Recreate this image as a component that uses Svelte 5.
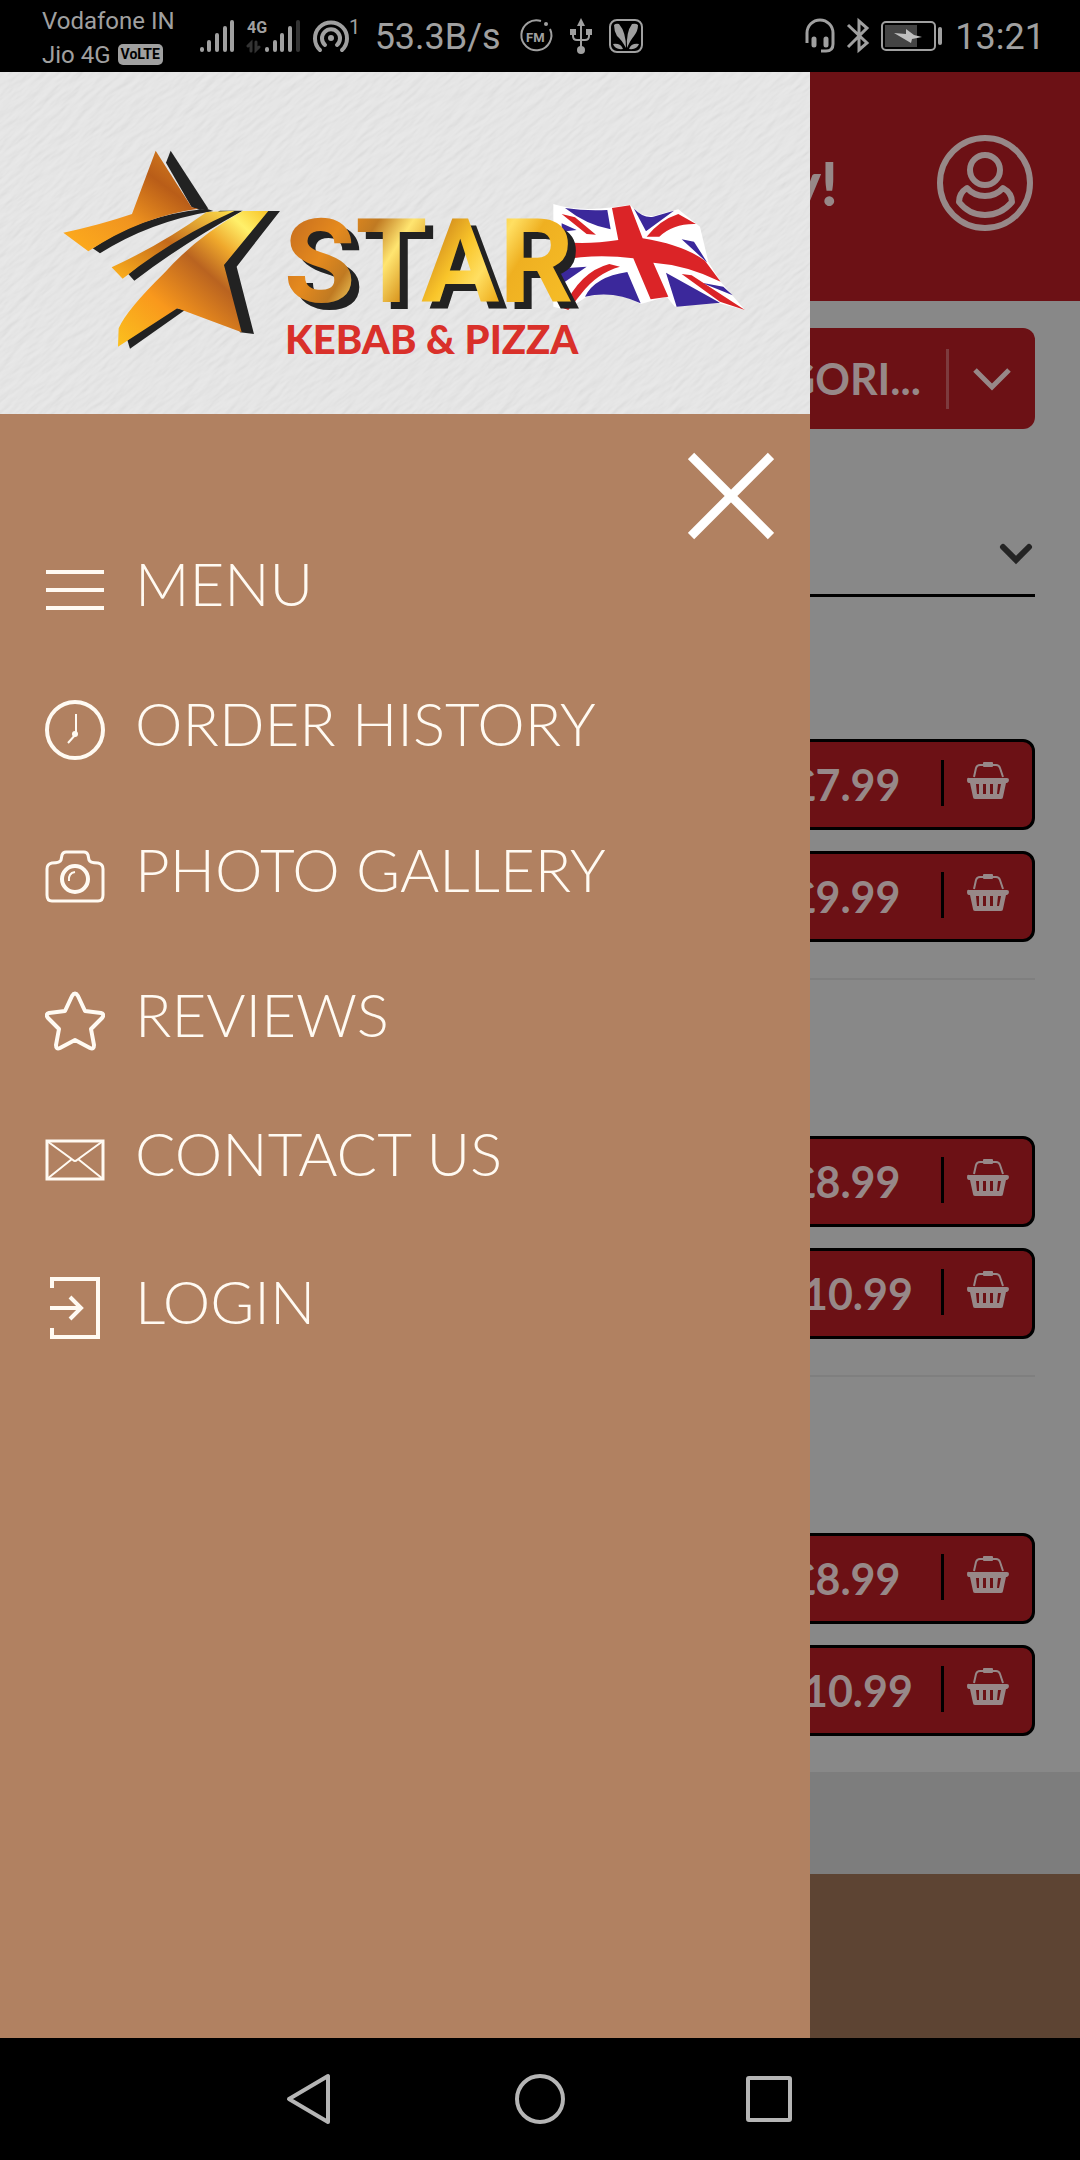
<script>
  const links = [
    { label: 'MENU', icon: 'bars' },
    { label: 'ORDER HISTORY', icon: 'clock' },
    { label: 'PHOTO GALLERY', icon: 'camera' },
    { label: 'REVIEWS', icon: 'star' },
    { label: 'CONTACT US', icon: 'mail' },
    { label: 'LOGIN', icon: 'login' },
  ];
  const groups = [
    ['£7.99', '£9.99'],
    ['£8.99', '£10.99'],
    ['£8.99', '£10.99'],
  ];
</script>

<div class="screen">
  <div class="status">
    <div class="carrier">
      <span>Vodafone IN</span>
      <span class="second">Jio 4G <b class="volte">VoLTE</b></span>
    </div>
    <div class="group signals">
      <svg width="36" height="34" viewBox="0 0 36 34" stroke="currentColor" stroke-width="4" stroke-linecap="round">
        <path d="M3 30v1M10 23v8M18 16v15M26 9v22M33 3v28" />
      </svg>
      <svg width="54" height="34" viewBox="0 0 54 34" stroke="currentColor" stroke-width="4" stroke-linecap="round">
        <text x="0" y="14" class="tiny">4G</text>
        <path d="M4 32V24l-3 3M9 23v8l3-3" fill="none" stroke="#333" stroke-width="3" />
        <path d="M20 30v1M28 23v8M35 16v15M43 9v22" />
        <path d="M51 3v28" stroke="#333" />
      </svg>
      <svg width="46" height="34" viewBox="0 0 46 34" fill="none" stroke="currentColor" stroke-width="4" stroke-linecap="round">
        <path d="M7 31A16 16 0 1 1 29 31" />
        <path d="M12 26A9 9 0 1 1 24 26" />
        <circle cx="18" cy="19" r="3" fill="currentColor" stroke="none" />
        <text x="36" y="15" class="one">1</text>
      </svg>
    </div>
    <span class="figure">53.3B/s</span>
    <div class="group apps">
      <svg width="34" height="34" viewBox="0 0 34 34" fill="none" stroke="currentColor" stroke-width="2">
        <path d="M22 2A15 15 0 1 0 31 10" />
        <circle cx="27" cy="5" r="2" fill="currentColor" stroke="none" />
        <text x="7" y="23" class="fm">FM</text>
      </svg>
      <svg width="22" height="36" viewBox="0 0 22 36" fill="none" stroke="currentColor" stroke-width="2">
        <path d="M11 4v28M3 13v5q0 4 4 4h8q4 0 4-4v-5" />
        <path d="M11 0l4 8H7zM0 11h6v6H0zM16 11h6v6h-6z" fill="currentColor" stroke="none" />
        <circle cx="11" cy="32" r="4" fill="currentColor" stroke="none" />
      </svg>
      <svg width="34" height="34" viewBox="0 0 34 34">
        <rect x="1" y="1" width="32" height="32" rx="7" fill="none" stroke="currentColor" stroke-width="2" />
        <path d="M5 6q2-2 5-1 7 8 7 24Q12 20 8 17 5 12 5 6zM29 6q-2-2-6-1-6 8-5 24 4-9 7-12 4-5 4-11zM4 25q8-1 10 5-8 1-10-5zM30 25q-8-1-10 5 8 1 10-5z" fill="currentColor" />
      </svg>
    </div>
    <div class="group system">
      <svg width="30" height="34" viewBox="0 0 30 34" fill="none" stroke="currentColor" stroke-width="3">
        <path d="M2 24V14a13 13 0 0 1 26 0v11q0 7-7 7h-5" />
        <path d="M9 20v6M21 20v6" stroke-width="5" stroke-linecap="round" />
      </svg>
      <svg width="22" height="36" viewBox="0 0 22 36" fill="none" stroke="currentColor" stroke-width="3">
        <path d="M1 7l19 18-8 7V3l8 7L1 29" />
      </svg>
      <svg width="62" height="30" viewBox="0 0 62 30">
        <rect x="1" y="1" width="53" height="28" rx="4" fill="none" stroke="currentColor" stroke-width="2" />
        <rect x="4" y="4" width="32" height="22" fill="#444" />
        <path d="M13 12l12 1V8l8 6 8 2-10 2-1 4z" fill="#c0c0c0" />
        <path d="M59 8v14" stroke="currentColor" stroke-width="4" stroke-linecap="round" />
      </svg>
      <span class="figure">13:21</span>
    </div>
  </div>

  <div class="stage">
    <div class="page">
      <header>
        <span class="greeting">y!</span>
        <button class="user" aria-label="Account">
          <svg width="98" height="98" viewBox="0 0 98 98" fill="none" stroke="currentColor" stroke-width="6">
            <circle cx="49" cy="49" r="45" />
            <circle cx="49" cy="36" r="15" />
            <path d="M31 54Q23 59 23 68 33 81 49 81 65 81 76 68 76 59 67 54 60 62 49 62 38 62 31 54z" stroke-linejoin="round" />
          </svg>
        </button>
      </header>
      <main>
        <button class="category">
          <span class="name">CATEGORI...</span>
          <span class="arrow">
            <svg width="38" height="24" viewBox="0 0 38 24" fill="none" stroke="currentColor" stroke-width="5"><path d="M2 3l17 17L36 3" /></svg>
          </span>
        </button>
        <div class="picker">
          <select aria-label="Section"><option></option></select>
          <svg width="34" height="22" viewBox="0 0 34 22" fill="none" stroke="#242424" stroke-width="6" stroke-linecap="round"><path d="M4 4l13 13L30 4" /></svg>
        </div>
        {#each groups as prices}
          <section>
            {#each prices as price}
              <button class="price">
                <span class="amount">{price}</span>
                <span class="bar"></span>
                <span class="basket">
                  <svg width="42" height="38" viewBox="0 0 42 38">
                    <path d="M7 15L9 6q1-3 4-3h16q3 0 4 3l3 9" fill="none" stroke="currentColor" stroke-width="2" />
                    <rect x="16" y="0" width="10" height="5" rx="1" fill="currentColor" />
                    <path fill="currentColor" fill-rule="evenodd" d="M2 16h38q2 0 2 2t-2 3h-1l-3 14q0 2-2 2H8q-2 0-2-2L3 21H2q-2 0-2-3t2-2zM9 22l1 10h2V22zM16 22v10h3V22zM23 22v10h3V22zM31 22l-1 10h2l2-10z" />
                  </svg>
                </span>
              </button>
            {/each}
          </section>
        {/each}
      </main>
      <div class="strip"></div>
      <footer></footer>
    </div>

    <aside class="drawer">
      <svg class="logo" viewBox="0 0 810 342" role="img" aria-label="Star Kebab and Pizza">
        <defs>
          <filter id="paper" x="0" y="0" width="100%" height="100%">
            <feTurbulence type="fractalNoise" baseFrequency="0.04 0.16" numOctaves="3" seed="4" result="n" />
            <feDiffuseLighting in="n" lighting-color="#ffffff" surfaceScale="1" diffuseConstant="1">
              <feDistantLight azimuth="90" elevation="64" />
            </feDiffuseLighting>
          </filter>
          <linearGradient id="top" x1="0" y1="1" x2="1" y2="0">
            <stop offset="0" stop-color="#ffae1c" /><stop offset=".4" stop-color="#f0941f" /><stop offset=".7" stop-color="#b95d18" /><stop offset="1" stop-color="#e08a20" />
          </linearGradient>
          <linearGradient id="mid" x1="0" y1="1" x2="1" y2="0">
            <stop offset="0" stop-color="#ffb31d" /><stop offset=".5" stop-color="#c46a1a" /><stop offset="1" stop-color="#ffe04c" />
          </linearGradient>
          <linearGradient id="low" x1="0" y1="1" x2="1" y2="0">
            <stop offset="0" stop-color="#fbc01e" /><stop offset=".3" stop-color="#f9981c" /><stop offset=".57" stop-color="#b96320" /><stop offset=".72" stop-color="#efa82c" /><stop offset=".86" stop-color="#fff06a" /><stop offset="1" stop-color="#f8c327" />
          </linearGradient>
          <linearGradient id="gold" x1="0" y1=".3" x2="1" y2=".6">
            <stop offset="0" stop-color="#c9701e" /><stop offset=".16" stop-color="#e58a1e" /><stop offset=".27" stop-color="#c07a22" /><stop offset=".38" stop-color="#ffe570" /><stop offset=".5" stop-color="#d9961f" /><stop offset=".6" stop-color="#f9c52a" /><stop offset=".7" stop-color="#ffdf62" /><stop offset=".8" stop-color="#efb021" /><stop offset="1" stop-color="#f5bb26" />
          </linearGradient>
        </defs>
        <rect width="810" height="342" fill="#dedede" />
        <g opacity=".35"><rect x="-250" y="-450" width="1300" height="1300" filter="url(#paper)" transform="rotate(-40 405 171)" /></g>
        <g transform="translate(40 58) scale(.3333)">
          <g fill="#222">
            <path d="M392 62L505 236 480 240 455 232 378 98z" />
            <path d="M158 355L180 370Q330 275 520 243L500 236Q300 255 158 355z" />
            <path d="M265 432L283 452Q430 340 608 242L540 242Q400 320 265 432z" />
            <path d="M680 243H720L590 410 642 612 600 607 550 405z" />
            <path d="M405 533L435 540 270 656 262 630z" />
          </g>
          <path fill="url(#top)" d="M347 62L276 252Q180 285 70 308L145 364Q300 260 475 236L455 232z" />
          <path fill="url(#mid)" d="M215 412L248 446Q400 325 585 242L500 246Q370 340 215 412z" />
          <path fill="url(#low)" d="M685 243H608Q470 320 372 430 260 540 236 595L234 650 412 535 605 607 552 405z" />
        </g>
        <g transform="translate(400 58) scale(.3333)">
          <path fill="#fff" d="M460 222Q530 245 640 232L690 224Q720 262 760 258L835 238 900 290 925 395 962 455 1035 540 940 515 825 530 800 500 722 522Q650 480 560 500L500 540 460 530z" />
          <g fill="#3b289b">
            <path d="M495 234Q560 244 622 240L632 298Q560 285 495 234zM485 280L530 300 485 305zM702 236Q730 265 760 260L822 242 738 304zM845 328L882 335 922 398zM470 416L560 410 480 466zM555 500Q585 440 682 426L722 520Q640 480 555 500zM798 428L960 518 830 530zM905 458L970 470 998 496z" />
          </g>
          <g fill="#db2427">
            <path d="M480 335Q560 345 655 330L636 234 690 226 728 325Q850 345 915 392L962 455Q860 405 760 398L805 500 752 508 700 385Q590 370 480 390z" />
            <path d="M485 252L525 262 588 314 560 312zM740 320Q780 270 835 252L888 282Q820 280 778 320zM490 535Q540 425 628 402L660 410Q590 430 545 490L505 540zM845 432L875 436 1035 540 960 515z" />
          </g>
        </g>
        <text class="brand" x="284" y="230" fill="url(#gold)">STAR</text>
        <text class="tagline" x="285" y="282">KEBAB &amp; PIZZA</text>
      </svg>

      <div class="closing">
        <button class="close" aria-label="Close menu">
          <svg width="86" height="88" viewBox="0 0 86 88" stroke="#fff" stroke-width="9"><path d="M3 4l80 80M83 4L3 84" /></svg>
        </button>
      </div>

      <nav>
        {#each links as { label, icon }}
          <a href="#{icon}">
            <svg class={icon} viewBox="0 0 60 64" fill="none" stroke="currentColor" stroke-width="4">
              {#if icon === 'bars'}
                <path d="M1 14h58M1 32h58M1 50h58" />
              {:else if icon === 'clock'}
                <circle cx="30" cy="32" r="28" />
                <path d="M31 16v20l-8 9" stroke-width="2" />
                <circle cx="30" cy="36" r="3" fill="currentColor" stroke="none" />
              {:else if icon === 'camera'}
                <path d="M7 19q8 0 9-3l1-5q1-3 4-3h18q3 0 4 3l1 5q1 3 9 3 5 1 5 6v26q0 6-5 6H7q-5 0-5-6V25q0-5 5-6z" stroke-width="3" />
                <circle cx="30" cy="35" r="13" />
                <path d="M24 37q-1-8 6-9" stroke-width="2" />
              {:else if icon === 'star'}
                <path stroke-linejoin="round" d="M27 7q3-5 6 0l7 15 16 2q4 1 1 5L46 40l3 16q0 5-4 3L30 51 15 59q-4 2-4-3l3-16L3 29q-3-4 1-5l16-2z" />
              {:else if icon === 'mail'}
                <path d="M2 13h56v38H2z" stroke-width="3" />
                <path d="M2 13l26 19q2 2 4 0l26-19M2 51l25-20M58 51L33 31" stroke-width="2" />
              {:else}
                <path d="M7 12V3h46v58H7v-9" />
                <path d="M5 32h31M25 21l11 11-11 11" />
              {/if}
            </svg>
            <span>{label}</span>
          </a>
        {/each}
      </nav>
    </aside>
  </div>

  <div class="keys">
    <button aria-label="Back">
      <svg width="50" height="54" viewBox="0 0 50 54"><path d="M43 4v46L4 27z" /></svg>
    </button>
    <button aria-label="Home">
      <svg width="50" height="54" viewBox="0 0 50 54"><circle cx="25" cy="27" r="23" /></svg>
    </button>
    <button aria-label="Recent apps">
      <svg width="50" height="54" viewBox="0 0 50 54"><rect x="3" y="6" width="42" height="42" rx="1" /></svg>
    </button>
  </div>
</div>

<style>
  :global(body) {
    margin: 0;
    background: #000;
  }
  .screen {
    display: flex;
    flex-direction: column;
    min-height: 100vh;
    font-family: Lato, sans-serif;
  }
  svg {
    display: block;
    flex: none;
  }
  button {
    margin: 0;
    padding: 0;
    border: 0;
    background: none;
    color: inherit;
    font: inherit;
  }

  .status {
    display: flex;
    align-items: center;
    height: 72px;
    padding: 0 35px 0 42px;
    color: #a0a0a0;
    background: #000;
    font-family: Roboto, sans-serif;
  }
  .status svg {
    overflow: visible;
  }
  .carrier {
    display: flex;
    flex-direction: column;
    padding-top: 3px;
    font-size: 24px;
    line-height: 34px;
    white-space: nowrap;
  }
  .second {
    display: flex;
    align-items: center;
    gap: 7px;
  }
  .volte {
    padding: 0 3px;
    border-radius: 5px;
    background: #a0a0a0;
    color: #000;
    font-size: 14px;
    line-height: 21px;
  }
  .group {
    display: flex;
    align-items: center;
    gap: 12px;
  }
  .signals {
    margin-left: 24px;
  }
  .apps {
    gap: 17px;
    margin-left: 18px;
  }
  .system {
    margin-left: auto;
  }
  .signals + .figure {
    margin-left: 16px;
  }
  .figure {
    padding-top: 2px;
    font-size: 36px;
    line-height: 40px;
  }
  .status text {
    fill: currentColor;
    stroke: none;
  }
  .tiny {
    font-size: 16px;
    font-weight: 700;
  }
  .one {
    font-size: 20px;
  }
  .fm {
    font-size: 13px;
    font-weight: 700;
  }

  .stage {
    position: relative;
    display: flex;
    flex: 1;
  }
  .page {
    display: flex;
    flex: 1;
    flex-direction: column;
    background: #888;
    color: #978888;
  }
  header {
    display: flex;
    align-items: center;
    justify-content: flex-end;
    gap: 98px;
    height: 221px;
    padding: 0 46px 8px;
    background: #6c1115;
  }
  .greeting {
    font-size: 60px;
    font-weight: 900;
  }
  main {
    display: flex;
    flex-direction: column;
    padding: 27px 45px 0;
  }
  .category {
    display: flex;
    align-items: center;
    justify-content: flex-end;
    height: 101px;
    border-radius: 12px;
    background: #6c1115;
    font-size: 43px;
    font-weight: 700;
  }
  .name {
    padding-right: 25px;
  }
  .arrow {
    display: flex;
    align-items: center;
    height: 60px;
    padding: 0 24px;
    border-left: 3px solid #7d3b3e;
  }
  .picker {
    display: grid;
    align-items: center;
    height: 80px;
    margin-top: 85px;
    border-bottom: 3px solid #000;
  }
  .picker select,
  .picker svg {
    grid-area: 1 / 1;
  }
  .picker select {
    width: 100%;
    height: 80px;
    border: 0;
    appearance: none;
    background: none;
    font: 40px Lato, sans-serif;
  }
  .picker svg {
    justify-self: end;
    margin-right: 2px;
    pointer-events: none;
  }
  section {
    display: flex;
    flex-direction: column;
    align-items: flex-end;
    gap: 21px;
    padding: 142px 0 36px;
  }
  section + section {
    padding-top: 156px;
    border-top: 2px solid #7f7f7f;
  }
  .price {
    display: flex;
    align-items: center;
    box-sizing: border-box;
    width: 288px;
    height: 91px;
    border: 3px solid #000;
    border-radius: 12px;
    background: #6c1115;
    font-size: 43px;
    font-weight: 700;
  }
  .amount {
    flex: 1;
    text-align: center;
  }
  .bar {
    width: 3px;
    height: 46px;
    margin-bottom: 3px;
    background: #000;
  }
  .basket {
    display: flex;
    justify-content: center;
    width: 88px;
    padding-bottom: 8px;
  }
  .strip {
    height: 102px;
    background: #7d7d7d;
  }
  footer {
    flex: 1;
    background: #5d4433;
  }

  .drawer {
    position: absolute;
    inset: 0 25% 0 0;
    background: #b18161;
    color: #fffaf2;
  }
  .logo {
    width: 100%;
    overflow: hidden;
  }
  .brand {
    font: 700 116px Roboto, sans-serif;
    filter: drop-shadow(8px 7px 0 #222);
  }
  .tagline {
    font: 900 40px Lato, sans-serif;
    fill: #d9302a;
  }
  .closing {
    display: flex;
    justify-content: flex-end;
    padding: 38px 36px 18px;
  }
  nav {
    display: flex;
    flex-direction: column;
    gap: 70px;
    padding: 0 45px;
  }
  nav a {
    display: flex;
    align-items: center;
    gap: 30px;
    color: inherit;
    text-decoration: none;
    font-size: 60px;
    font-weight: 300;
    line-height: 48px;
  }
  nav span {
    padding-bottom: 14px;
  }
  nav svg {
    width: 60px;
    height: 64px;
  }
  nav .clock,
  nav .camera {
    padding: 6px 0;
  }
  nav .star {
    padding: 5px 0;
  }
  nav .login {
    padding: 14px 0;
  }

  .keys {
    display: flex;
    align-items: center;
    justify-content: center;
    gap: 180px;
    height: 122px;
    background: #000;
  }
  .keys svg {
    fill: none;
    stroke: #b5b5b5;
    stroke-width: 4;
    stroke-linejoin: round;
  }
</style>
